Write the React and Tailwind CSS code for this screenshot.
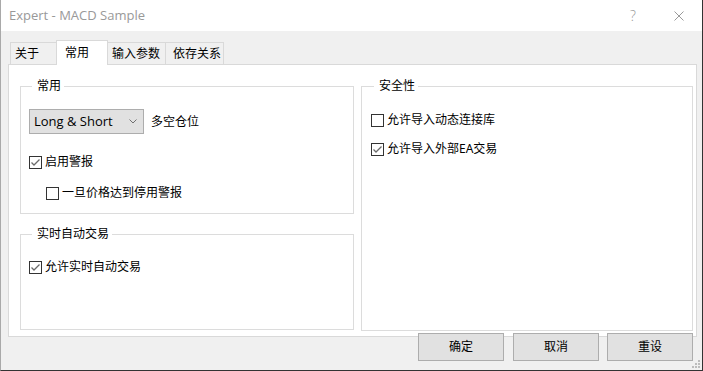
import React from "react";

const CJK = "font-['Noto_Sans','Noto_Sans_CJK_SC',sans-serif]";

function Check({ checked, label }) {
  return (
    <div className="flex items-center h-[16px] gap-[3px]">
      <div className="w-[13px] h-[13px] border border-[#333333] bg-white flex items-center justify-center shrink-0">
        {checked && (
          <svg width="11" height="11" viewBox="0 0 11 11">
            <path d="M1.5 5.5 L4 8 L9.5 2.5" fill="none" stroke="#6b6b6b" strokeWidth="1.3" />
          </svg>
        )}
      </div>
      <span className="leading-[16px] whitespace-nowrap">{label}</span>
    </div>
  );
}

function Group({ title, className, children }) {
  return (
    <fieldset className={"border border-[#dcdcdc] min-w-0 " + className}>
      <legend className="ml-[3px] pl-[5px] pr-[3px] leading-[16px] whitespace-nowrap">{title}</legend>
      {children}
    </fieldset>
  );
}

function Tab({ label, selected, w, pl }) {
  return (
    <div
      className={
        "-ml-px first:ml-0 border-t border-l border-r border-[#d9d9d9] flex leading-[16px] whitespace-nowrap " +
        (selected ? "bg-white h-[25px] -mb-px relative z-10 items-start pt-[4px]" : "bg-[#f0f0f0] h-[22px] items-center")
      }
      style={{ width: w, paddingLeft: pl }}
    >
      {label}
    </div>
  );
}

export default function App() {
  return (
    <div className={"relative w-[703px] h-[371px] flex flex-col bg-[#f0f0f0] border-l border-l-[#a9a9a9] border-r border-r-[#333333] border-b border-b-[#333333] text-[12px] text-black " + CJK}>
      {/* Title bar */}
      <div className="h-[31px] bg-white flex items-center pl-[8px] shrink-0">
        <span className="font-['Open_Sans',sans-serif] text-[13px] text-[#999999] leading-none">Expert - MACD Sample</span>
        <div className="flex-1" />
        <span className="font-['Open_Sans',sans-serif] font-light text-[14px] text-[#999999] leading-none mr-[38px]">?</span>
        <svg width="10" height="10" viewBox="0 0 10 10" className="mr-[18px]">
          <path d="M0.5 0.5 L9.5 9.5 M9.5 0.5 L0.5 9.5" stroke="#9a9a9a" strokeWidth="1" />
        </svg>
      </div>

      {/* Tabs */}
      <div className="flex items-end h-[24px] mt-[9px] ml-[9px] shrink-0">
        <Tab label="关于" w={47} pl={4} />
        <Tab label="常用" w={52} pl={8} selected />
        <Tab label="输入参数" w={59} pl={4} />
        <Tab label="依存关系" w={59} pl={7} />
      </div>

      {/* Panel */}
      <div className="ml-[7px] w-[689px] h-[273px] shrink-0 bg-white border border-[#d9d9d9] pt-[13px] pl-[11px] flex gap-[7px]">
        <div className="w-[334px] flex flex-col">
          <Group title="常用" className="h-[136px] pl-[8px]">
            <div className="mt-[15px] flex items-center gap-[7px]">
              <div className="w-[115px] h-[25px] bg-[#e1e1e1] border border-[#adadad] flex items-center pl-[4px] pr-[6px]">
                <span className="font-['Open_Sans',sans-serif] text-[13px] leading-none flex-1">Long &amp; Short</span>
                <svg width="8" height="5" viewBox="0 0 8 5">
                  <path d="M0.5 0.5 L4 4 L7.5 0.5" fill="none" stroke="#707070" strokeWidth="1" />
                </svg>
              </div>
              <span>多空仓位</span>
            </div>
            <div className="mt-[20px]">
              <Check checked label="启用警报" />
            </div>
            <div className="mt-[15px] pl-[17px]">
              <Check label="一旦价格达到停用警报" />
            </div>
          </Group>
          <Group title="实时自动交易" className="h-[104px] mt-[12px] pl-[8px]">
            <div className="mt-[17px]">
              <Check checked label="允许实时自动交易" />
            </div>
          </Group>
        </div>
        <Group title="安全性" className="w-[332px] h-[253px] pl-[9px]">
          <div className="mt-[18px]">
            <Check label="允许导入动态连接库" />
          </div>
          <div className="mt-[13px]">
            <Check checked label="允许导入外部EA交易" />
          </div>
        </Group>
      </div>

      {/* Buttons */}
      <div className="relative z-10 -mt-[4px] flex justify-end pr-[9px] gap-[9px]">
        <button className="w-[86px] h-[28px] bg-[#e1e1e1] border border-[#adadad] leading-none">确定</button>
        <button className="w-[86px] h-[28px] bg-[#e1e1e1] border border-[#adadad] leading-none">取消</button>
        <button className="-ml-px w-[86px] h-[28px] bg-[#e1e1e1] border border-[#adadad] leading-none">重设</button>
      </div>

      {/* Resize grip */}
      <svg width="9" height="9" viewBox="0 0 9 9" className="absolute right-[1px] bottom-[1px]">
        <rect x="6" y="0" width="2" height="2" fill="#bcbcbc" />
        <rect x="3" y="3" width="2" height="2" fill="#bcbcbc" />
        <rect x="6" y="3" width="2" height="2" fill="#bcbcbc" />
        <rect x="0" y="6" width="2" height="2" fill="#bcbcbc" />
        <rect x="3" y="6" width="2" height="2" fill="#bcbcbc" />
        <rect x="6" y="6" width="2" height="2" fill="#bcbcbc" />
      </svg>
    </div>
  );
}
